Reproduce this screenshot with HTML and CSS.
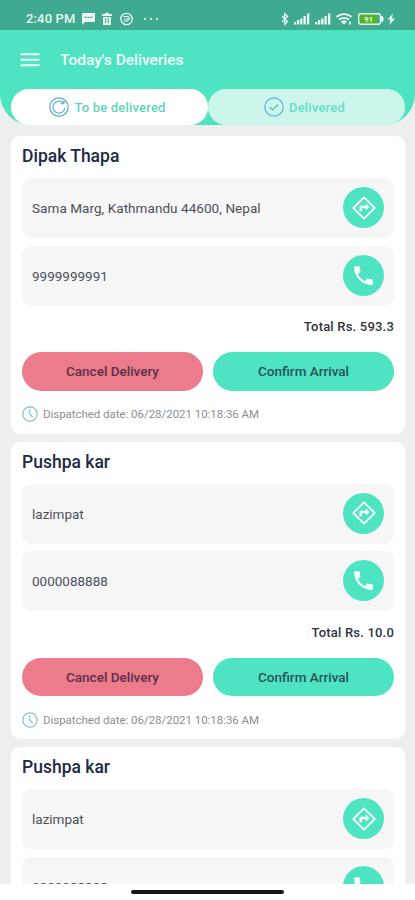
FILE: index.html
```html
<!DOCTYPE html>
<html lang="en">
<head>
<meta charset="utf-8">
<title>Today's Deliveries</title>
<link rel="stylesheet" href="styles.css">
</head>
<body>
<svg class="defs" aria-hidden="true">
  <symbol id="directions" viewBox="0 0 24 24"><path fill="none" stroke="currentColor" stroke-width="1.8" stroke-linejoin="round" d="M12 1.300 22.700 12 12 22.700 1.300 12Z"/><path fill="currentColor" d="M7.500 15.200v-4.200c0-.8.5-1.300 1.300-1.300h5V7.500l3.700 3.500-3.700 3.500V12.200h-3.800v3z"/></symbol>
  <symbol id="phone" viewBox="0 0 24 24"><path fill="currentColor" d="M6.620 10.790c1.440 2.830 3.760 5.140 6.590 6.590l2.200-2.200c.27-.27.67-.36 1.020-.24 1.120.37 2.330.57 3.570.57.55 0 1 .45 1 1V20c0 .55-.45 1-1 1-9.390 0-17-7.610-17-17 0-.55.45-1 1-1h3.500c.55 0 1 .45 1 1 0 1.250.2 2.450.57 3.570.11.35.03.74-.25 1.020z"/></symbol>
  <symbol id="clock" viewBox="0 0 16 16"><circle cx="8" cy="8" r="7.200" fill="none" stroke="#73c3dc" stroke-width="1.200"/><path d="M7.700 3.500V8l2.800 3" fill="none" stroke="#73c3dc" stroke-width="1.100"/></symbol>
</svg>
<div class="status">
  <span class="time">2:40 PM</span>
  <svg class="status-left" width="80" height="14" viewBox="0 0 80 14" fill="#e8f7f2">
    <path d="M1 1h13v9H4l-3 3z"/><path d="M3.500 5.300h8" stroke="#3faa90" stroke-width="1.300" stroke-dasharray="2 1"/>
    <path d="M21 2h3V.8h4V2h3v2H21zM22 5h8v8h-8z"/><path d="M24.700 6v5M27.300 6v5" stroke="#3faa90"/>
    <circle cx="45.500" cy="7" r="5.700" fill="none" stroke="#e8f7f2" stroke-width="1.300"/><path d="M42.500 4.500h4.500l1.500 2-2 2.500h-4M43 7h4" fill="none" stroke="#e8f7f2" stroke-width="1.200"/>
    <circle cx="64" cy="7" r="1.100"/><circle cx="70" cy="7" r="1.100"/><circle cx="76" cy="7" r="1.100"/>
  </svg>
  <svg class="status-right" width="118" height="16" viewBox="0 0 118 16" fill="#e8f7f2">
    <path d="M2 5l5.500 5.500L4.700 13.500v-11L7.500 5.500 2 11" fill="none" stroke="#e8f7f2" stroke-width="1.200"/>
    <path d="M14 11h2.300v2.500H14zM17 9h2.300v4.500H17zM20.200 7.500h2.300v6h-2.300zM23.500 5h2.300v8.500h-2.300zM27 2.500h2.300v11H27zM35 11h2.300v2.500H35zM38 9h2.300v4.500H38zM41.200 7.500h2.300v6h-2.300zM44.500 5h2.300v8.500h-2.300zM48 2.500h2.300v11H48z"/>
    <path d="M56.500 6a11 11 0 0 1 15 0M59 8.700a7.500 7.500 0 0 1 10 0M61.500 11.200a4 4 0 0 1 5 0" fill="none" stroke="#e8f7f2" stroke-width="1.800"/><path d="M61.800 11.300 64 13.800l2.200-2.500zM69 10.500h2v3h-2z"/>
    <rect x="78.700" y="2.700" width="21.600" height="10.600" rx="2.300" fill="#50b52b" stroke="#e8f7f2" stroke-width="1.400"/><rect x="97" y="4" width="2.500" height="8" fill="#3faa90"/><path d="M101 5h1.500l1.500 3-1.500 3H101z"/>
    <text x="88.500" y="11" class="charge">91</text>
    <path d="M113 2.500l-5.500 6h3L109.500 14l5.500-6.500h-3z"/>
  </svg>
</div>
<header class="header">
  <div class="bar">
    <svg width="20" height="14" viewBox="0 0 20 14"><path d="M.5 1.200h19M.5 6.700h19M.5 12.200h19" stroke="#f2fffb" stroke-width="2"/></svg>
    <h1>Today's Deliveries</h1>
  </div>
  <nav class="tabs">
    <div class="tab active">
      <svg width="20" height="20" viewBox="0 0 20 20" fill="none"><circle cx="10" cy="10" r="9.200" stroke="#64a5d3" stroke-width="1.200"/><path d="M14.500 6.200a6 6 0 1 0 1.400 4.500M14.900 3.700v3h-3.200" stroke="#65b9c7" stroke-width="1.300"/></svg>
      <span>To be delivered</span>
    </div>
    <div class="tab">
      <svg width="20" height="20" viewBox="0 0 20 20" fill="none"><circle cx="10" cy="10" r="9.200" stroke="#62b3dc" stroke-width="1.200"/><path d="M5.500 10.300l3 2.700 5.500-5.500" stroke="#55bfae" stroke-width="1.200"/></svg>
      <span>Delivered</span>
    </div>
  </nav>
</header>
<main class="list">
  <article class="card">
    <h2>Dipak Thapa</h2>
    <div class="row"><span class="address">Sama Marg, Kathmandu 44600, Nepal</span><i><svg width="24" height="24"><use href="#directions"/></svg></i></div>
    <div class="row"><span>9999999991</span><i><svg width="25" height="25"><use href="#phone"/></svg></i></div>
    <p class="total">Total Rs. 593.3</p>
    <div class="actions"><button class="cancel">Cancel Delivery</button><button>Confirm Arrival</button></div>
    <p class="date"><svg width="16" height="16"><use href="#clock"/></svg><span>Dispatched date: 06/28/2021 10:18:36 AM</span></p>
  </article>
  <article class="card">
    <h2>Pushpa kar</h2>
    <div class="row"><span>lazimpat</span><i><svg width="24" height="24"><use href="#directions"/></svg></i></div>
    <div class="row"><span>0000088888</span><i><svg width="25" height="25"><use href="#phone"/></svg></i></div>
    <p class="total">Total Rs. 10.0</p>
    <div class="actions"><button class="cancel">Cancel Delivery</button><button>Confirm Arrival</button></div>
    <p class="date"><svg width="16" height="16"><use href="#clock"/></svg><span>Dispatched date: 06/28/2021 10:18:36 AM</span></p>
  </article>
  <article class="card">
    <h2>Pushpa kar</h2>
    <div class="row"><span>lazimpat</span><i><svg width="24" height="24"><use href="#directions"/></svg></i></div>
    <div class="row"><span>0000088888</span><i><svg width="25" height="25"><use href="#phone"/></svg></i></div>
  </article>
</main>
<footer class="home"><div></div></footer>
</body>
</html>
```
FILE: styles.css
```css
* { box-sizing: border-box; }
body {
  margin: 0;
  height: 900px;
  display: flex;
  flex-direction: column;
  overflow: hidden;
  background: #eee;
  font-family: Roboto, sans-serif;
  color: #28324b;
}
h1, h2, p { margin: 0; }
svg { display: block; flex: none; }
.defs { width: 0; height: 0; position: absolute; }
.status {
  height: 30px;
  flex: none;
  padding: 8px 17px 0 26px;
  display: flex;
  align-items: flex-start;
  background: #3faa90;
  color: #e8f7f2;
}
.time { font-size: 13px; line-height: 22px; font-weight: 500; letter-spacing: .15px; width: 55px; white-space: nowrap; }
.status-left { margin-top: 4px; }
.status-right { margin: 3px 0 0 auto; }
.charge { font-size: 8px; font-weight: 700; text-anchor: middle; fill: #e6f8c8; }
.header {
  height: 95px;
  flex: none;
  background: #4fe4c1;
  border-radius: 0 0 31px 31px;
  padding: 0 10px 0 11px;
}
.bar { height: 59px; padding-left: 9px; display: flex; align-items: center; gap: 20px; }
h1 { font-size: 15.500px; font-weight: 500; color: #effff9; letter-spacing: 0; }
.tabs { display: flex; }
.tab {
  flex: 1;
  height: 36px;
  border-radius: 18px;
  padding-right: 4px;
  display: flex;
  align-items: center;
  justify-content: center;
  gap: 5px;
  background: #ccf6ec;
  color: #69dec5;
  font-size: 13px;
  font-weight: 500;
  letter-spacing: .2px;
}
.tab.active { background: #fff; color: #60d4b9; }
.list { flex: 1; min-height: 0; overflow: hidden; padding: 11px 10px 0 11px; }
.card { height: 297.500px; margin-bottom: 8.200px; padding: 0 11px; border-radius: 9px; background: #fff; overflow: hidden; }
h2 { height: 42px; line-height: 41px; font-size: 17.500px; font-weight: 500; color: #202945; letter-spacing: 0; }
.row {
  height: 60px;
  margin-bottom: 7.500px;
  padding: 0 10px;
  border-radius: 9px;
  background: #f6f6f6;
  display: flex;
  align-items: center;
  justify-content: space-between;
  font-size: 13.500px;
  color: #4b505a;
}
.address { letter-spacing: .06px; }
.row i { width: 41px; height: 41px; margin-top: -1px; border-radius: 50%; background: #4fe4c1; color: #f5fffc; display: flex; align-items: center; justify-content: center; }
.total { height: 39px; line-height: 28px; text-align: right; font-size: 13px; font-weight: 500; letter-spacing: .2px; color: #30343d; }
.actions { display: flex; gap: 10px; }
button { flex: 1; height: 38.500px; padding: 0; border: 0; border-radius: 20px; background: #4fe4c1; color: #27525b; font: 500 13.500px Roboto, sans-serif; }
.cancel { background: #ec7b8b; color: #5b3148; }
.date { height: 47px; display: flex; align-items: center; gap: 5px; font-size: 11.500px; letter-spacing: -.04px; color: #8b8e91; }
.home { height: 16px; flex: none; background: #fff; display: flex; justify-content: center; padding-top: 6px; }
.home div { width: 153px; height: 4px; border-radius: 2px; background: #17131a; }
```
